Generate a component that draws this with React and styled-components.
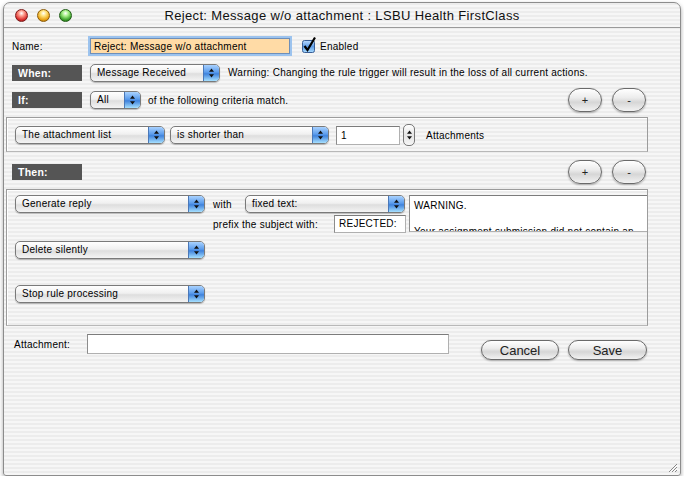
import React from 'react';
import styled, { createGlobalStyle } from 'styled-components';

const Global = createGlobalStyle`
  html, body {
    margin: 0;
    padding: 0;
    background: #ffffff;
  }
  body {
    font-family: "Liberation Sans", Arial, sans-serif;
    font-size: 10px;
    letter-spacing: 0.25px;
    color: #000;
  }
`;

const Window = styled.div`
  position: relative;
  width: 676px;
  height: 472px;
  margin: 2px 0 0 3px;
  border: 1px solid #8c8c8c;
  border-radius: 7px 7px 3px 3px;
  background: repeating-linear-gradient(
    to bottom,
    #ececec 0px,
    #ececec 2px,
    #f6f6f6 2px,
    #f6f6f6 4px
  );
  box-shadow: 0 2px 4px rgba(0, 0, 0, 0.35);
  overflow: hidden;
`;

const TitleBar = styled.div`
  display: flex;
  align-items: center;
  height: 24px;
  border-bottom: 1px solid #9a9a9a;
`;

const Lights = styled.div`
  display: flex;
  gap: 9px;
  width: 57px;
  padding-left: 11px;
`;

const Light = styled.div`
  width: 13px;
  height: 13px;
  border-radius: 50%;
  box-sizing: border-box;
  border: 1px solid ${p => p.$edge};
  background: radial-gradient(circle at 50% 30%, #ffffff 0, ${p => p.$light} 30%, ${p => p.$color} 70%, ${p => p.$edge} 100%);
`;

const Title = styled.div`
  flex: 1;
  text-align: center;
  font-size: 13px;
  letter-spacing: 0.35px;
  color: #111;
  margin-right: 68px;
`;

const Content = styled.div`
  width: 642px;
  margin-left: 2px;
  padding-top: 8px;
`;

const Row = styled.div`
  display: flex;
  align-items: center;
  height: ${p => p.$h || 20}px;
  margin-top: ${p => p.$mt || 0}px;
  padding-left: 6px;
  padding-right: 2px;
`;

const Label = styled.div`
  width: ${p => p.$w}px;
  flex: none;
  white-space: nowrap;
`;

const Text = styled.div`
  margin-left: ${p => p.$ml || 0}px;
  white-space: nowrap;
`;

const NameInput = styled.div`
  width: 200px;
  height: 16px;
  box-sizing: border-box;
  margin-left: 1px;
  padding-left: 3px;
  line-height: 16px;
  background: #ffdba6;
  border: 1px solid #6f8fb8;
  box-shadow: 0 0 0 2px #9cc3ee;
  white-space: nowrap;
`;

const CheckWrap = styled.div`
  margin-left: 12px;
  width: 14px;
  height: 14px;
  flex: none;
`;

const Bar = styled.div`
  width: 64px;
  height: 16px;
  line-height: 16px;
  padding-left: 6px;
  background: #555555;
  color: #ffffff;
  font-weight: bold;
  font-size: 10.5px;
  flex: none;
`;

const PopupBox = styled.div`
  display: flex;
  width: ${p => p.$w}px;
  height: 18px;
  margin-left: ${p => p.$ml || 0}px;
  box-sizing: border-box;
  border: 1px solid #7a7a7a;
  border-radius: 5px;
  background: linear-gradient(to bottom, #ffffff 0%, #f0f0f0 45%, #dedede 55%, #f4f4f4 100%);
  box-shadow: 0 1px 1px rgba(0, 0, 0, 0.25);
  overflow: hidden;
  flex: none;
`;

const PopupText = styled.div`
  flex: 1;
  padding-left: 6px;
  line-height: 16px;
  white-space: nowrap;
  overflow: hidden;
`;

const PopupArrows = styled.div`
  width: 15px;
  display: flex;
  align-items: center;
  justify-content: center;
  border-left: 1px solid #4a78b8;
  background: linear-gradient(to bottom, #a9d2ff 0%, #5b9cec 45%, #3f82dc 55%, #a6e0ff 100%);
`;

const Arrows = () => (
  <svg width="7" height="10" viewBox="0 0 7 10">
    <path d="M3.5 0.5 L6 3.8 L1 3.8 Z" fill="#111" />
    <path d="M3.5 9.5 L6 6.2 L1 6.2 Z" fill="#111" />
  </svg>
);

const Popup = ({ w, ml, children }) => (
  <PopupBox $w={w} $ml={ml}>
    <PopupText>{children}</PopupText>
    <PopupArrows>
      <Arrows />
    </PopupArrows>
  </PopupBox>
);

const PillButton = styled.div`
  width: ${p => p.$w}px;
  height: ${p => p.$h}px;
  margin-left: ${p => p.$ml || 0}px;
  box-sizing: border-box;
  border: 1px solid #6a6a6a;
  border-radius: ${p => p.$h / 2}px;
  background: linear-gradient(to bottom, #ffffff 0%, #ececec 40%, #d6d6d6 60%, #f2f2f2 100%);
  box-shadow: 0 1px 2px rgba(0, 0, 0, 0.3);
  display: flex;
  align-items: center;
  justify-content: center;
  font-size: ${p => p.$fs || 11}px;
  letter-spacing: 0;
  color: #222;
  flex: none;
`;

const RightGroup = styled.div`
  display: flex;
  margin-left: auto;
`;

const GroupBox = styled.div`
  height: ${p => p.$h}px;
  margin-top: 5px;
  box-sizing: border-box;
  border: 1px solid #9c9c9c;
  border-bottom-color: #b8b8b8;
  box-shadow: inset 1px 1px 0 #ffffff;
  padding: ${p => p.$pt}px 0 0 8px;
  overflow: hidden;
`;

const InnerRow = styled.div`
  display: flex;
  align-items: ${p => p.$align || 'center'};
  margin-top: ${p => p.$mt || 0}px;
`;

const Field = styled.div`
  width: ${p => p.$w}px;
  height: ${p => p.$h || 18}px;
  margin-left: ${p => p.$ml || 0}px;
  box-sizing: border-box;
  padding-left: 4px;
  line-height: ${p => (p.$h || 18) - 2}px;
  background: #ffffff;
  border: 1px solid #b0b0b0;
  border-top-color: #7c7c7c;
  border-left-color: #8c8c8c;
  white-space: nowrap;
  flex: none;
`;

const Stepper = styled.div`
  width: 12px;
  height: 22px;
  margin-left: 3px;
  box-sizing: border-box;
  border: 1px solid #777;
  border-radius: 5px;
  background: linear-gradient(to bottom, #ffffff, #e4e4e4 50%, #f6f6f6);
  display: flex;
  align-items: center;
  justify-content: center;
  flex: none;
`;

const MidCol = styled.div`
  margin-left: 8px;
  width: 193px;
  flex: none;
`;

const TextArea = styled.div`
  width: 239px;
  height: 37px;
  margin-left: 3px;
  box-sizing: border-box;
  padding: 3px 4px;
  background: #ffffff;
  border: 1px solid #b0b0b0;
  border-top-color: #7c7c7c;
  border-left-color: #8c8c8c;
  line-height: 13px;
  overflow: hidden;
  white-space: nowrap;
  flex: none;
`;

const BottomRow = styled.div`
  display: flex;
  align-items: flex-start;
  margin-top: 8px;
  padding-left: 8px;
`;

const Grip = styled.div`
  position: absolute;
  right: 2px;
  bottom: 2px;
  width: 12px;
  height: 12px;
`;

const CheckBox = () => (
  <svg width="14" height="14" viewBox="0 0 14 14" style={{ overflow: 'visible' }}>
    <defs>
      <linearGradient id="cb" x1="0" y1="0" x2="0" y2="1">
        <stop offset="0" stopColor="#bcdcff" />
        <stop offset="0.5" stopColor="#5d9ce8" />
        <stop offset="1" stopColor="#a9dcff" />
      </linearGradient>
    </defs>
    <rect x="0.5" y="1.5" width="12" height="12" rx="2" fill="url(#cb)" stroke="#3a5f96" />
    <path d="M2.5 7 L5.5 11 L13 -1.5" fill="none" stroke="#000" strokeWidth="2.2" />
  </svg>
);

export default function App() {
  return (
    <>
      <Global />
      <Window>
        <TitleBar>
          <Lights>
            <Light $color="#d92b2b" $light="#ff9a8a" $edge="#7a1a1a" />
            <Light $color="#e8a012" $light="#ffe27a" $edge="#8a5a08" />
            <Light $color="#3aa02a" $light="#a8f08a" $edge="#1e5a14" />
          </Lights>
          <Title>Reject: Message w/o attachment : LSBU Health FirstClass</Title>
        </TitleBar>

        <Content>
          <Row $h={20}>
            <Label $w={77}>Name:</Label>
            <NameInput>Reject: Message w/o attachment</NameInput>
            <CheckWrap>
              <CheckBox />
            </CheckWrap>
            <Text $ml={4}>Enabled</Text>
          </Row>

          <Row $h={17} $mt={8}>
            <Bar>When:</Bar>
            <Popup w={130} ml={8}>Message Received</Popup>
            <Text $ml={8}>Warning: Changing the rule trigger will result in the loss of all current actions.</Text>
          </Row>

          <Row $h={24} $mt={7}>
            <Bar>If:</Bar>
            <Popup w={51} ml={8}>All</Popup>
            <Text $ml={7}>of the following criteria match.</Text>
            <RightGroup>
              <PillButton $w={34} $h={24}>+</PillButton>
              <PillButton $w={34} $h={24} $ml={10}>-</PillButton>
            </RightGroup>
          </Row>

          <GroupBox $h={35} $pt={6}>
            <InnerRow>
              <Popup w={150}>The attachment list</Popup>
              <Popup w={159} ml={5}>is shorter than</Popup>
              <Field $w={64} $h={19} $ml={7}>1</Field>
              <Stepper>
                <Arrows />
              </Stepper>
              <Text $ml={11}>Attachments</Text>
            </InnerRow>
          </GroupBox>

          <Row $h={24} $mt={8}>
            <Bar>Then:</Bar>
            <RightGroup>
              <PillButton $w={34} $h={24}>+</PillButton>
              <PillButton $w={34} $h={24} $ml={10}>-</PillButton>
            </RightGroup>
          </Row>

          <GroupBox $h={137} $pt={5}>
            <InnerRow $align="flex-start">
              <Popup w={190}>Generate reply</Popup>
              <MidCol>
                <InnerRow>
                  <Label $w={32}>with</Label>
                  <Popup w={160}>fixed text:</Popup>
                </InnerRow>
                <InnerRow $mt={2}>
                  <Label $w={121}>prefix the subject with:</Label>
                  <Field $w={72}>REJECTED:</Field>
                </InnerRow>
              </MidCol>
              <TextArea>
                WARNING.
                <br />
                <br />
                Your assignment submission did not contain an
              </TextArea>
            </InnerRow>
            <InnerRow $mt={8}>
              <Popup w={190}>Delete silently</Popup>
            </InnerRow>
            <InnerRow $mt={26}>
              <Popup w={190}>Stop rule processing</Popup>
            </InnerRow>
          </GroupBox>

          <BottomRow>
            <Label $w={73} style={{ marginTop: 5 }}>Attachment:</Label>
            <Field $w={362} $h={20} />
            <PillButton $w={78} $h={20} $ml={32} $fs={13} style={{ marginTop: 6 }}>Cancel</PillButton>
            <PillButton $w={79} $h={20} $ml={9} $fs={13} style={{ marginTop: 6 }}>Save</PillButton>
          </BottomRow>
        </Content>

        <Grip>
          <svg width="12" height="12" viewBox="0 0 12 12">
            <path d="M11 3 L3 11 M11 6 L6 11 M11 9 L9 11" stroke="#888" strokeWidth="1" />
            <path d="M11.5 4 L4 11.5 M11.5 7 L7 11.5" stroke="#fff" strokeWidth="1" />
          </svg>
        </Grip>
      </Window>
    </>
  );
}
